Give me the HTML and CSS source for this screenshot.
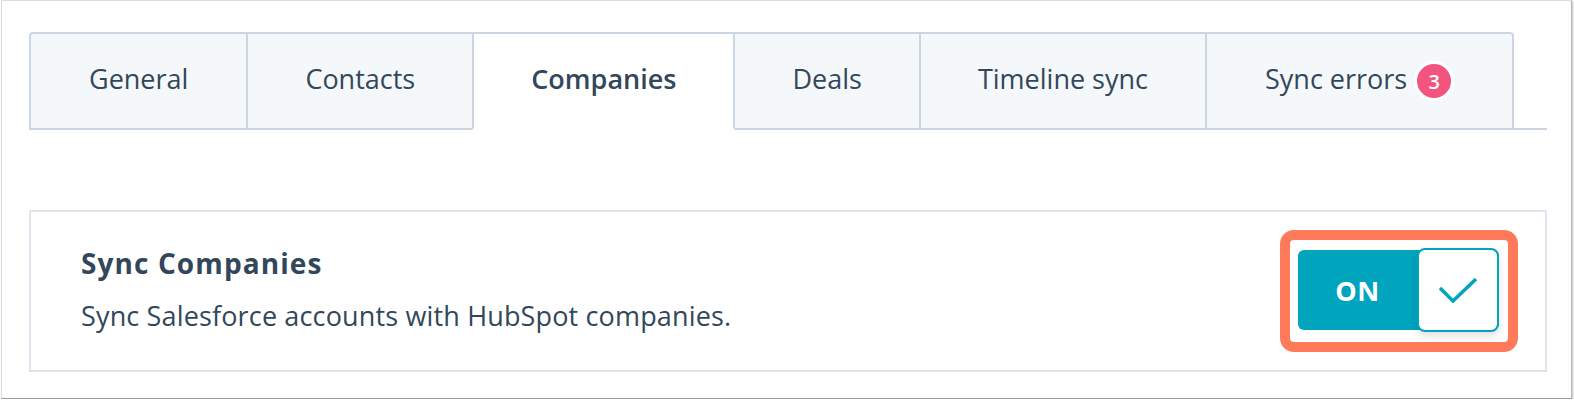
FILE: index.html
```html
<!DOCTYPE html>
<html lang="en">
<head>
    <meta charset="UTF-8">
    <meta name="viewport" content="width=device-width, initial-scale=1.0">
    <title>Salesforce settings</title>
    <link rel="stylesheet" href="styles.css">
</head>
<body>
    <div class="frame">
        <div class="tabs">
            <div class="tab first">General</div>
            <div class="tab">Contacts</div>
            <div class="tab active">Companies</div>
            <div class="tab">Deals</div>
            <div class="tab">Timeline sync</div>
            <div class="tab last">Sync errors <span class="badge">3</span></div>
            <div class="tab-fill"></div>
        </div>

        <div class="setting">
            <div class="setting-text">
                <h3>Sync Companies</h3>
                <p>Sync Salesforce accounts with HubSpot companies.</p>
            </div>
            <div class="highlight">
                <div class="toggle">
                    <span class="toggle-label">ON</span>
                    <span class="toggle-knob">
                        <svg width="40" height="26" viewBox="0 0 40 26">
                            <polyline points="2,11 15,24 38,2" fill="none" stroke="#00a4bd" stroke-width="3.5"/>
                        </svg>
                    </span>
                </div>
            </div>
        </div>
    </div>
</body>
</html>
```

FILE: styles.css
```css
body {
    margin: 0;
    padding: 0;
    background: white;
    font-family: "Open Sans", Lato, sans-serif;
    color: #33475b;
}
.frame {
    box-sizing: border-box;
    width: 1571px;
    height: 399px;
    margin-left: 1px;
    padding: 31px 24px 0 27px;
    border: 1px solid #dcdcdc;
    border-right-color: #b4b4b4;
    border-bottom-color: #9a9a9a;
    box-shadow: 1px 1px 2px rgba(0, 0, 0, 0.25);
}
.tabs {
    display: flex;
    height: 98px;
}
.tab {
    box-sizing: border-box;
    display: flex;
    align-items: center;
    padding: 0 57px 6px;
    background: #f5f8fa;
    border: 2px solid #cbd6e2;
    border-right: none;
    font-size: 27px;
    white-space: nowrap;
}
.tab.first {
    padding: 0 58px 6px;
    border-top-left-radius: 4px;
}
.tab.last {
    padding: 0 58px 6px;
    border-right: 2px solid #cbd6e2;
    border-top-right-radius: 4px;
}
.tab.active {
    padding: 0 57px 6px;
    background: white;
    border-bottom-color: white;
    border-right: 2px solid #cbd6e2;
    font-weight: 600;
}
.tab.active + .tab {
    border-left: none;
}
.tab-fill {
    flex: 1;
    border-bottom: 2px solid #cbd6e2;
}
.badge {
    display: inline-flex;
    align-items: center;
    justify-content: center;
    width: 34px;
    height: 34px;
    margin: 6px 0 0 7px;
    border: 3px solid white;
    border-radius: 50%;
    background: #f2547d;
    color: white;
    font-size: 20px;
    font-weight: 600;
}
.setting {
    box-sizing: border-box;
    display: flex;
    align-items: center;
    justify-content: space-between;
    height: 162px;
    margin-top: 80px;
    padding: 0 27px 0 50px;
    border: 2px solid #dfe3eb;
}
.setting-text {
    padding-bottom: 4px;
}
.setting-text h3 {
    margin: 0;
    font-size: 28px;
    line-height: 32px;
    font-weight: 700;
    letter-spacing: 1.1px;
}
.setting-text p {
    margin: 21px 0 0;
    font-size: 27px;
    line-height: 32px;
    letter-spacing: 0.15px;
}
.highlight {
    padding: 10px 9px 12px 8px;
    border: 10px solid #ff7a59;
    border-radius: 14px;
    background: white;
}
.toggle {
    display: flex;
    align-items: center;
    width: 201px;
    height: 80px;
    border-radius: 6px;
    background: #00a4bd;
}
.toggle-label {
    flex: 1;
    text-align: center;
    color: white;
    font-size: 27px;
    font-weight: 700;
    letter-spacing: 0.5px;
}
.toggle-knob {
    box-sizing: border-box;
    display: flex;
    align-items: center;
    justify-content: center;
    width: 82px;
    height: 84px;
    border: 2px solid #00a4bd;
    border-radius: 8px;
    background: white;
    box-shadow: 0 4px 8px rgba(0, 0, 0, 0.12);
}
```
